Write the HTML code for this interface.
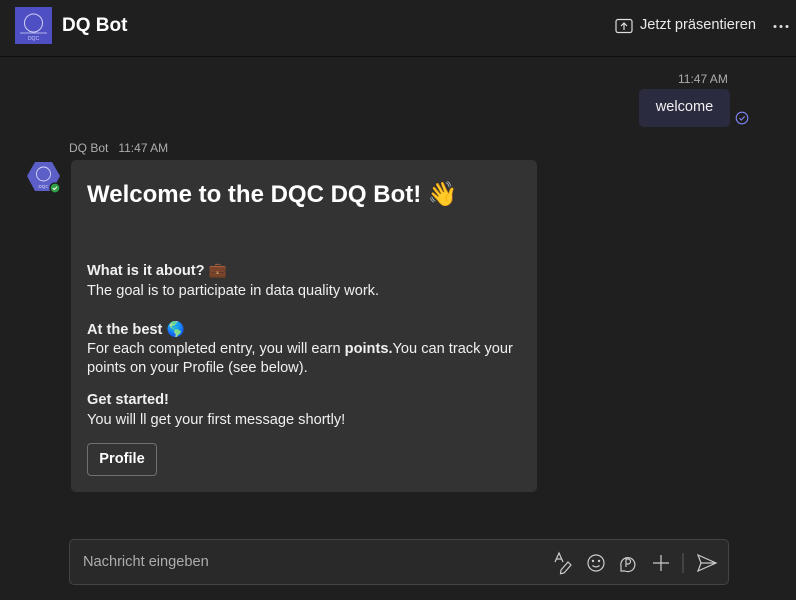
<!DOCTYPE html>
<html><head><meta charset="utf-8"><style>
*{margin:0;padding:0;box-sizing:border-box}
body{width:796px;height:600px;background:#1f1f1f;font-family:"Liberation Sans",sans-serif;color:#fff;position:relative;overflow:hidden}
.abs{position:absolute}
.hdr{left:0;top:0;width:796px;height:57px;border-bottom:1px solid #0d0d0d;background:#1f1f1f}
.logo{left:15px;top:7px;width:37px;height:37px;background:#4f4fc4}
.t14{font-size:14px;line-height:19px}
.card{left:71px;top:160px;width:466px;height:332px;background:#333;border-radius:5px}
.card p{position:absolute;left:16px;font-size:14.6px;line-height:19px;color:#f0f0f0;white-space:nowrap;letter-spacing:0}
b{font-weight:bold}
</style></head><body>
<div class="abs hdr"></div>
<div class="abs logo"><svg width="37" height="37"><circle cx="18.5" cy="16" r="9" fill="none" stroke="#cfd0f5" stroke-width="1"/><line x1="5" y1="26" x2="32" y2="26" stroke="#cfd0f5" stroke-width="0.7"/><text x="18.5" y="33" font-size="5" fill="#cfd0f5" text-anchor="middle" font-family="Liberation Sans">DQC</text></svg></div>
<div class="abs" style="left:62px;top:14px;font-size:19px;font-weight:bold;line-height:24px">DQ Bot</div>
<svg class="abs" style="left:615px;top:18px" width="18" height="16"><rect x="1" y="1.5" width="16" height="13" rx="2" fill="none" stroke="#ddd" stroke-width="1.2"/><path d="M9 12V5M6 8l3-3 3 3" fill="none" stroke="#ddd" stroke-width="1.2"/></svg>
<div class="abs t14" style="left:640px;top:16px;color:#e8e8e8;font-size:14.6px">Jetzt präsentieren</div>
<svg class="abs" style="left:773px;top:24px" width="16" height="5"><circle cx="2" cy="2.5" r="1.5" fill="#ddd"/><circle cx="8" cy="2.5" r="1.5" fill="#ddd"/><circle cx="14" cy="2.5" r="1.5" fill="#ddd"/></svg>
<div class="abs" style="left:678px;top:72px;font-size:12px;color:#adadad">11:47 AM</div>
<div class="abs" style="left:639px;top:89px;width:91px;height:38px;background:#2b2b40;border-radius:5px;font-size:14.6px;line-height:36px;text-align:center;color:#f0f0f0">welcome</div>
<svg class="abs" style="left:735px;top:111px" width="14" height="14"><circle cx="7" cy="7" r="5.8" fill="none" stroke="#7f85f5" stroke-width="1.1"/><path d="M4.5 7.2l1.8 1.8 3.4-3.6" fill="none" stroke="#7f85f5" stroke-width="1.1"/></svg>
<div class="abs" style="left:69px;top:141px;font-size:12px;color:#adadad;white-space:nowrap">DQ Bot&nbsp;&nbsp;&nbsp;11:47 AM</div>
<svg class="abs" style="left:26px;top:160px" width="36" height="34"><polygon points="9,2 26,2 34,16 26,31 9,31 1,16" fill="#5b5fc7"/><circle cx="17.5" cy="14" r="7" fill="none" stroke="#d7d8f7" stroke-width="0.9"/><text x="17.5" y="28" font-size="4.5" fill="#d7d8f7" text-anchor="middle" font-family="Liberation Sans">DQC</text><circle cx="29" cy="28" r="5" fill="#2f9e44" stroke="#1f1f1f" stroke-width="1.3"/><path d="M26.8 28l1.5 1.5 2.8-2.8" fill="none" stroke="#fff" stroke-width="1"/></svg>
<div class="abs card">
<p style="top:20px;font-size:24px;line-height:30px;font-weight:bold;letter-spacing:0;color:#fff">Welcome to the DQC DQ Bot! 👋</p>
<p style="top:102px"><b>What is it about? 💼</b></p>
<p style="top:122px">The goal is to participate in data quality work.</p>
<p style="top:161px"><b>At the best 🌎</b></p>
<p style="top:180px">For each completed entry, you will earn <b>points.</b>You can track your</p>
<p style="top:199px">points on your Profile (see below).</p>
<p style="top:231px"><b>Get started!</b></p>
<p style="top:251px">You will ll get your first message shortly!</p>
<div style="position:absolute;left:16px;top:283px;width:70px;height:33px;border:1px solid #707070;border-radius:4px;font-size:14.6px;font-weight:bold;line-height:31px;text-align:center;color:#fff">Profile</div>
</div>
<div class="abs" style="left:69px;top:539px;width:660px;height:46px;background:#292929;border:1px solid #444;border-radius:5px"></div>
<div class="abs t14" style="left:83px;top:553px;color:#adadad;font-size:14.6px">Nachricht eingeben</div>
<svg class="abs" style="left:552px;top:550px" width="170" height="26">
<g fill="none" stroke="#ccc" stroke-width="1.2">
<path d="M3 12l4-9 4 9M4.5 9h5"/><path d="M9 20l7-8 3 3-7 8-3.5 0.7z"/>
<circle cx="44" cy="13" r="8"/><circle cx="41" cy="11" r="0.6" fill="#ccc"/><circle cx="47" cy="11" r="0.6" fill="#ccc"/><path d="M40.5 15.5q3.5 3 7 0"/>
<path d="M69 21v-5a7 7 0 1 1 4 5z"/><path d="M74 17v-8h2a2.5 2.5 0 0 1 0 5h-2"/>
<path d="M109 5v16M101 13h16"/>
<path d="M131 3v20" stroke="#555"/>
<path d="M146 5l18 8-18 8 3-8z M149 13h15"/>
</g></svg>
</body></html>
